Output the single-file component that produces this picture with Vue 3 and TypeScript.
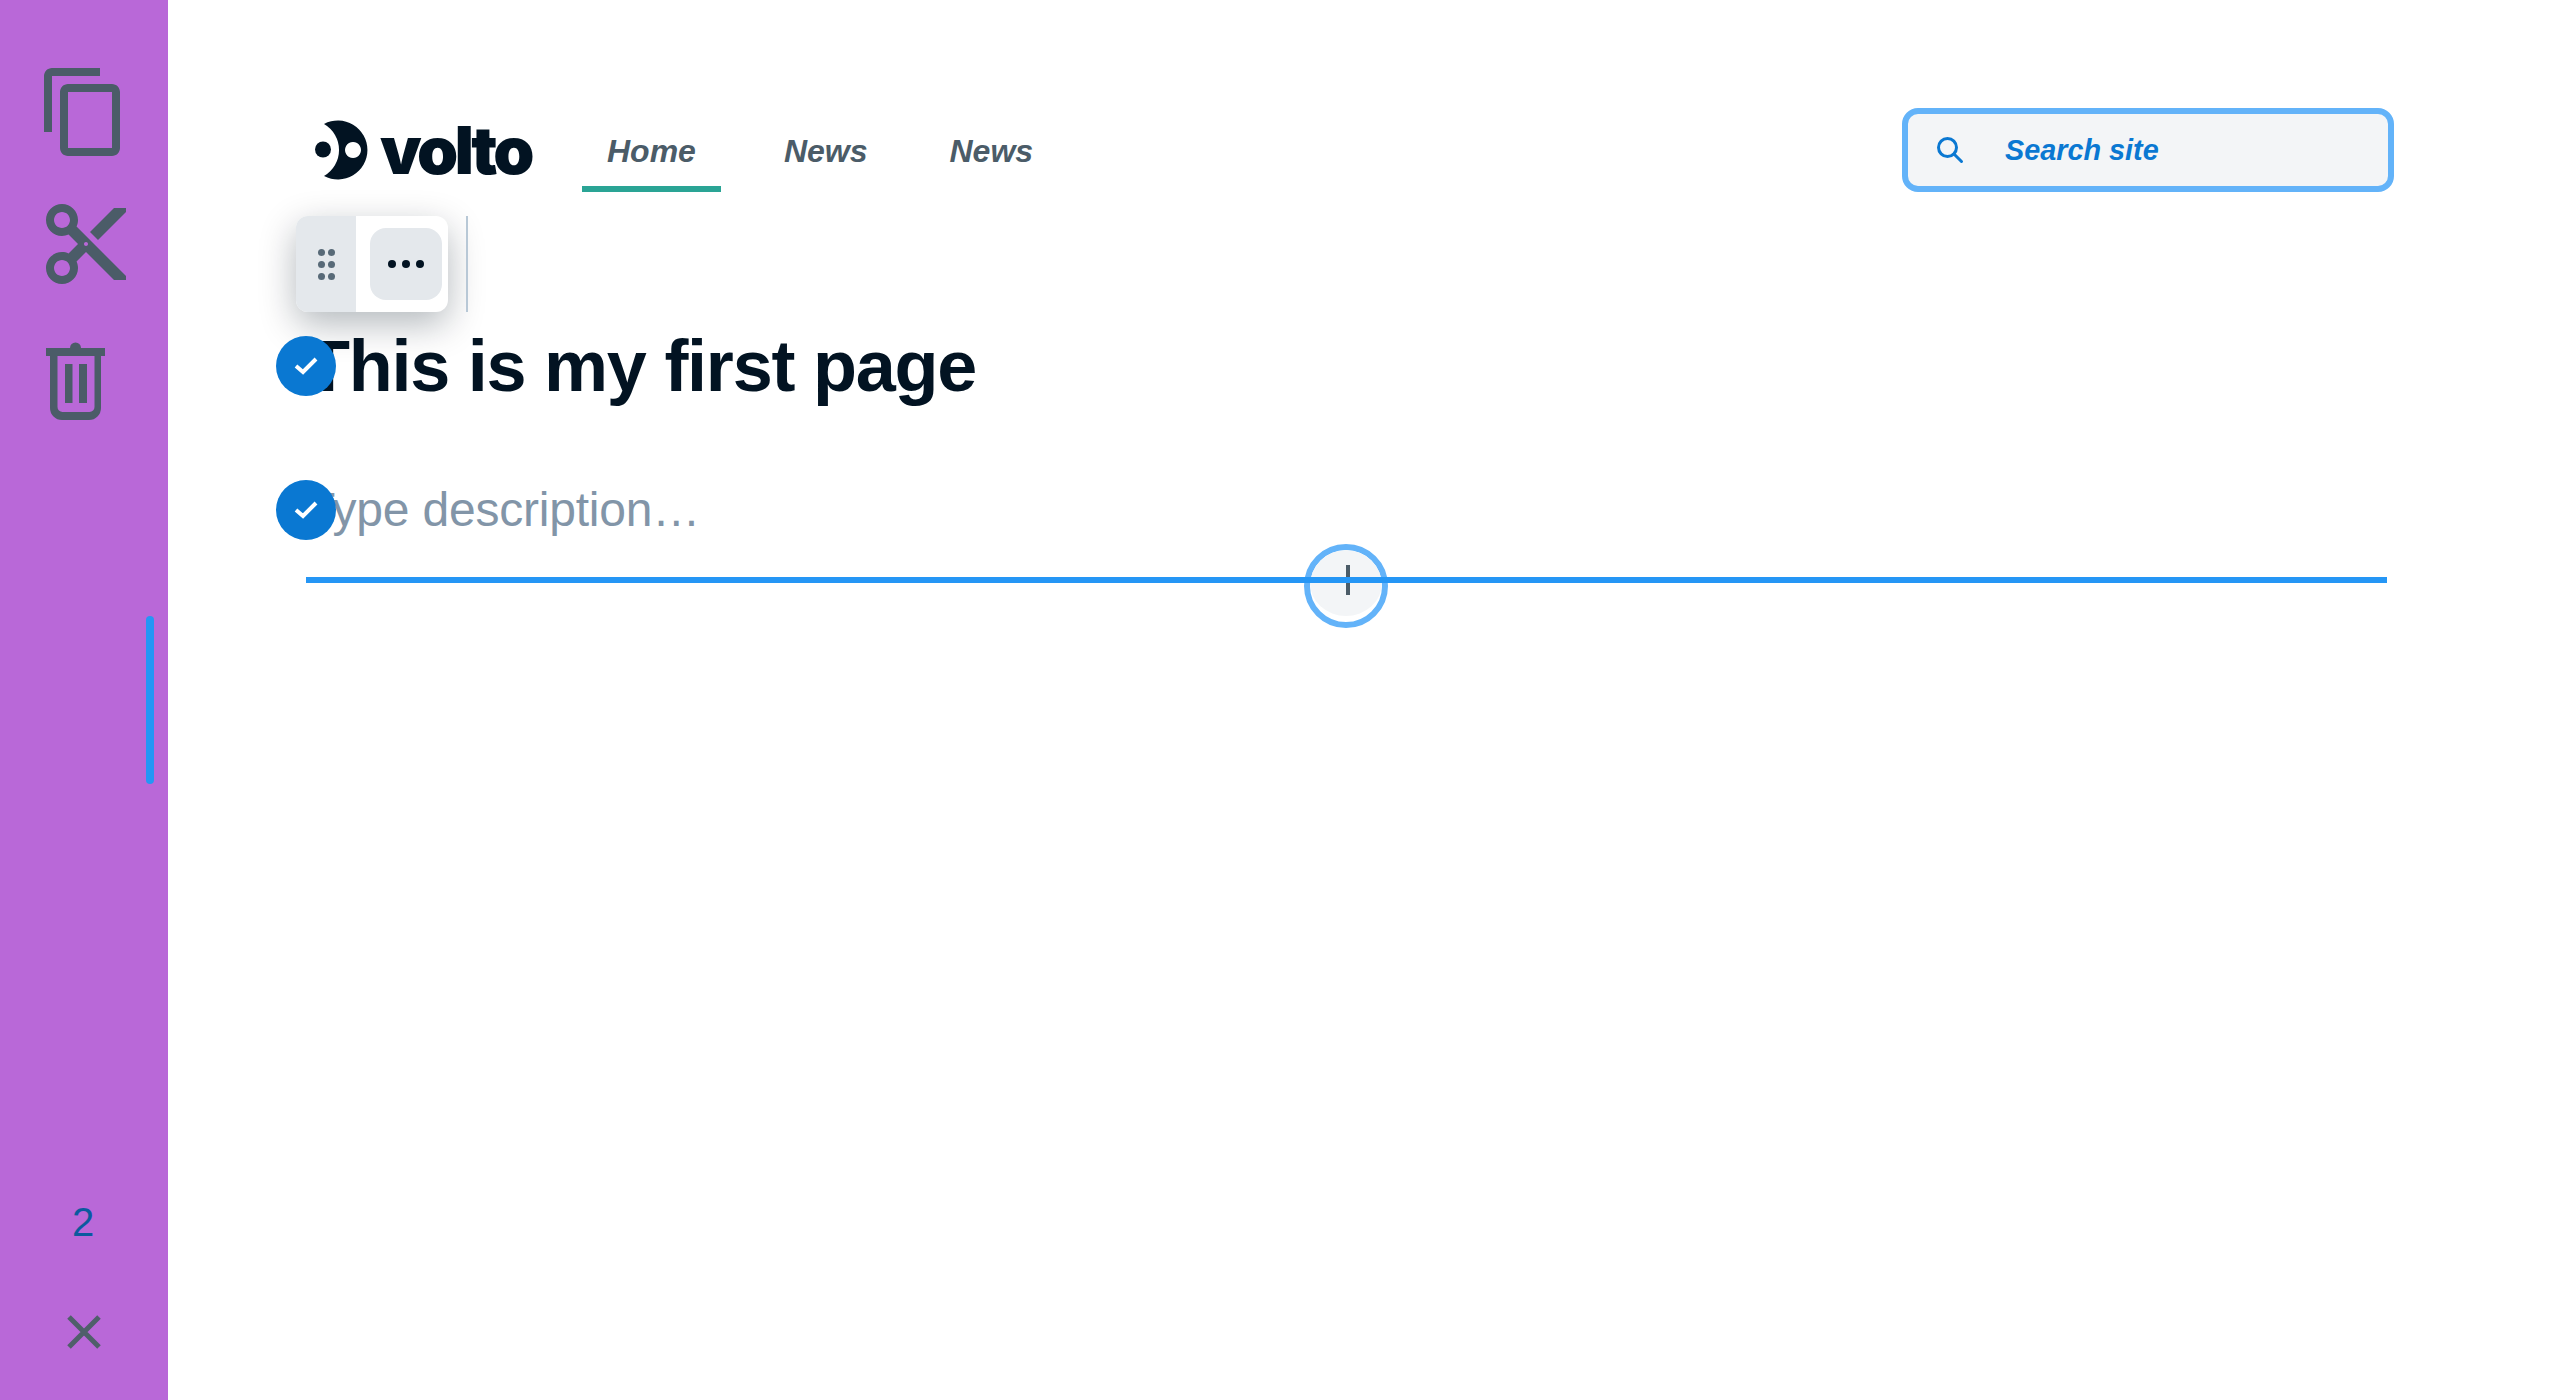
<template>
  <div class="page">
    <aside class="sidebar">
      <div class="actions">
        <button class="action action-copy" type="button">
          <svg viewBox="0 0 24 24" width="96" height="96"><path d="M16 1H4c-1.1 0-2 .9-2 2v14h2V3h12V1zm3 4H8c-1.1 0-2 .9-2 2v14c0 1.1.9 2 2 2h11c1.1 0 2-.9 2-2V7c0-1.1-.9-2-2-2zm0 16H8V7h11v14z" /></svg>
        </button>
        <button class="action action-cut" type="button">
          <svg viewBox="0 0 24 24" width="96" height="96"><path d="M9.64 7.64c.23-.5.36-1.05.36-1.64 0-2.21-1.79-4-4-4S2 3.79 2 6s1.79 4 4 4c.59 0 1.14-.13 1.64-.36L10 12l-2.36 2.36C7.14 14.13 6.59 14 6 14c-2.21 0-4 1.79-4 4s1.79 4 4 4 4-1.79 4-4c0-.59-.13-1.14-.36-1.64L12 14l7 7h3v-1L9.64 7.64zM6 8c-1.1 0-2-.89-2-2s.9-2 2-2 2 .89 2 2-.9 2-2 2zm0 12c-1.1 0-2-.89-2-2s.9-2 2-2 2 .89 2 2-.9 2-2 2zm6-7.500c-.28 0-.5-.22-.5-.5s.22-.5.5-.5.5.22.5.5-.22.5-.5.5zM19 3l-6 6 2 2 7-7V3z" /></svg>
        </button>
        <button class="action action-trash" type="button">
          <svg viewBox="0 0 96 96" width="96" height="96">
            <path d="M18 14h59v8H18z" />
            <path d="M42 14a5.500 5.500 0 0 1 11 0z" />
            <path d="M22 22h7.500v51a5 5 0 0 0 5 5h27a5 5 0 0 0 5-5V22H73v52a12 12 0 0 1-12 12H34a12 12 0 0 1-12-12z" />
            <path d="M37 30h7.500v39H37zM51 30h8v39h-8z" />
          </svg>
        </button>
      </div>
      <span class="scroll-thumb"></span>
      <div class="footer">
        <span class="count">{{ selectedCount }}</span>
        <button class="close" type="button">
          <svg viewBox="0 0 34 34" width="34" height="34"><path d="M2 2l30 30M32 2L2 32" /></svg>
        </button>
      </div>
    </aside>

    <main class="content">
      <header class="header">
        <div class="logo">
          <svg class="logo-mark" viewBox="0 0 54 60" width="54" height="60">
            <circle cx="8" cy="29.500" r="8" />
            <path fill-rule="evenodd" d="M9 4A29.500 29.500 0 1 1 9 56 30 30 0 0 0 9 4zM38 22a8 8 0 1 0 .01 0z" />
          </svg>
          <span class="logo-text">volto</span>
        </div>
        <nav class="nav">
          <a v-for="(item, i) in navItems" :key="i" class="nav-item" :class="{ active: i === 0 }">{{ item }}</a>
        </nav>
        <div class="search">
          <svg viewBox="0 0 28 28" width="28" height="28"><circle cx="11.500" cy="11.500" r="9" /><path d="M18 18l7.500 7.500" /></svg>
          <span class="search-text">Search site</span>
        </div>
      </header>

      <div class="toolbar-row">
        <div class="toolbar">
          <div class="drag">
            <span v-for="n in 6" :key="n" class="drag-dot"></span>
          </div>
          <div class="more">
            <span v-for="n in 3" :key="n" class="more-dot"></span>
          </div>
        </div>
        <span class="toolbar-divider"></span>
      </div>

      <div class="block block-title">
        <span class="check">
          <svg viewBox="0 0 24 20" width="24" height="20"><path d="M2 10l7 6L22 3" /></svg>
        </span>
        <h1>This is my first page</h1>
      </div>
      <div class="block block-desc">
        <span class="check">
          <svg viewBox="0 0 24 20" width="24" height="20"><path d="M2 10l7 6L22 3" /></svg>
        </span>
        <p>Type description…</p>
      </div>

      <div class="insert">
        <span class="insert-line"></span>
        <div class="add">
          <span class="add-fill"></span>
          <span class="add-bar"></span>
        </div>
        <span class="insert-line line-over"></span>
      </div>
    </main>
  </div>
</template>

<script setup lang="ts">
const selectedCount: number = 2
const navItems: string[] = ['Home', 'News', 'News']
</script>

<style>
html,
body {
  margin: 0;
  background: #fff;
}
</style>

<style scoped>
.page {
  display: flex;
  height: 1400px;
  font-family: "Liberation Sans", Arial, sans-serif;
}

.sidebar {
  position: relative;
  flex: 0 0 168px;
  display: flex;
  flex-direction: column;
  justify-content: space-between;
  background: #b968d8;
}

.actions {
  display: flex;
  flex-direction: column;
  align-items: center;
  gap: 36px;
  padding-top: 64px;
}

.action {
  display: block;
  padding: 0;
  border: 0;
  background: none;
  height: 96px;
}

.action svg {
  display: block;
  fill: #4b5c68;
}

.action-cut {
  margin-left: 4px;
}

.action-trash {
  margin-top: 6px;
  margin-left: -16px;
}

.scroll-thumb {
  position: absolute;
  left: 146px;
  top: 616px;
  width: 8px;
  height: 168px;
  border-radius: 4px;
  background: #2596f5;
}

.footer {
  display: flex;
  flex-direction: column;
  align-items: center;
  padding-bottom: 51px;
}

.count {
  margin-left: -2px;
  font-size: 40px;
  line-height: 46px;
  color: #0b5a9e;
}

.close {
  display: block;
  height: 34px;
  margin-top: 70px;
  padding: 0;
  border: 0;
  background: none;
}

.close svg {
  display: block;
  fill: none;
  stroke: #4f5f6a;
  stroke-width: 5;
}

.content {
  flex: 1;
  padding: 108px 166px 0 138px;
  min-width: 0;
}

.header {
  display: flex;
  align-items: center;
  height: 84px;
}

.logo {
  display: flex;
  align-items: center;
  gap: 11px;
  width: 217px;
  margin-left: 9px;
  color: #021322;
}

.logo-mark {
  flex: none;
  fill: #021322;
}

.logo-text {
  font-family: Inter, sans-serif;
  font-weight: 900;
  font-size: 66px;
  line-height: 60px;
  letter-spacing: -3.700px;
}

.nav {
  display: flex;
  gap: 35px;
  margin-left: 50px;
  align-self: stretch;
}

.nav-item {
  box-sizing: border-box;
  height: 84px;
  padding: 25px 25px 0;
  border-bottom: 6px solid transparent;
  font-size: 32px;
  font-weight: 700;
  font-style: italic;
  line-height: 37px;
  color: #4b5c68;
}

.nav-item:nth-child(2) {
  padding-left: 28px;
  padding-right: 22px;
}

.nav-item.active {
  border-bottom-color: #2aa495;
}

.search {
  box-sizing: border-box;
  display: flex;
  align-items: center;
  width: 492px;
  height: 84px;
  margin-left: auto;
  padding-left: 28px;
  border: 6px solid #63b3f9;
  border-radius: 16px;
  background: #f3f5f7;
}

.search svg {
  fill: none;
  stroke: #0a78d2;
  stroke-width: 3;
  stroke-linecap: round;
}

.search-text {
  margin-left: 41px;
  font-size: 28.800px;
  font-weight: 700;
  font-style: italic;
  color: #0a78d2;
}

.toolbar-row {
  display: flex;
  gap: 18px;
  margin-top: 24px;
  margin-left: -10px;
  height: 96px;
}

.toolbar {
  display: flex;
  width: 152px;
  border-radius: 12px;
  background: #fff;
  box-shadow: 0 12px 36px rgba(2, 19, 34, 0.3);
  overflow: hidden;
}

.drag {
  display: grid;
  grid-template-columns: repeat(2, 7px);
  gap: 5px 3px;
  align-content: center;
  justify-content: center;
  width: 60px;
  background: #e4e8ec;
}

.drag-dot {
  width: 7px;
  height: 7px;
  border-radius: 50%;
  background: #586a78;
}

.more {
  display: flex;
  align-items: center;
  justify-content: center;
  gap: 6px;
  width: 72px;
  height: 72px;
  margin: 12px 0 0 14px;
  border-radius: 16px;
  background: #e4e8ec;
}

.more-dot {
  width: 8px;
  height: 8px;
  border-radius: 50%;
  background: #021322;
}

.toolbar-divider {
  width: 2px;
  background: #b8c8d6;
}

.block {
  position: relative;
}

.block-title {
  margin-top: 24px;
  height: 60px;
}

.block-title h1 {
  margin: 0;
  font-size: 72px;
  line-height: 60px;
  letter-spacing: -1.250px;
  font-weight: 700;
  color: #021322;
}

.block-desc {
  margin-top: 84px;
  height: 60px;
}

.block-desc p {
  margin: 0;
  font-size: 48px;
  line-height: 60px;
  letter-spacing: -0.200px;
  color: #8295a8;
}

.check {
  position: absolute;
  z-index: 1;
  left: -30px;
  top: 0;
  display: flex;
  align-items: center;
  justify-content: center;
  width: 60px;
  height: 60px;
  border-radius: 50%;
  background: #0a78d2;
}

.check svg {
  fill: none;
  stroke: #fff;
  stroke-width: 4;
}

.insert {
  position: relative;
  margin-top: 37px;
  margin-right: 7px;
  height: 6px;
}

.insert-line {
  display: block;
  height: 6px;
  background: #2596f5;
}

.line-over {
  position: absolute;
  left: 998px;
  top: 0;
  width: 84px;
}

.add {
  box-sizing: border-box;
  position: absolute;
  left: 998px;
  top: -33px;
  width: 84px;
  height: 84px;
  border: 6px solid #63b3f9;
  border-radius: 50%;
  background: #fff;
  overflow: hidden;
}

.add-fill {
  position: absolute;
  left: 0;
  top: 0;
  width: 72px;
  height: 66px;
  border-radius: 50%;
  background: #f3f5f7;
}

.add-bar {
  position: absolute;
  left: 36px;
  top: 15px;
  width: 4px;
  height: 30px;
  background: #4b5c68;
}
</style>
